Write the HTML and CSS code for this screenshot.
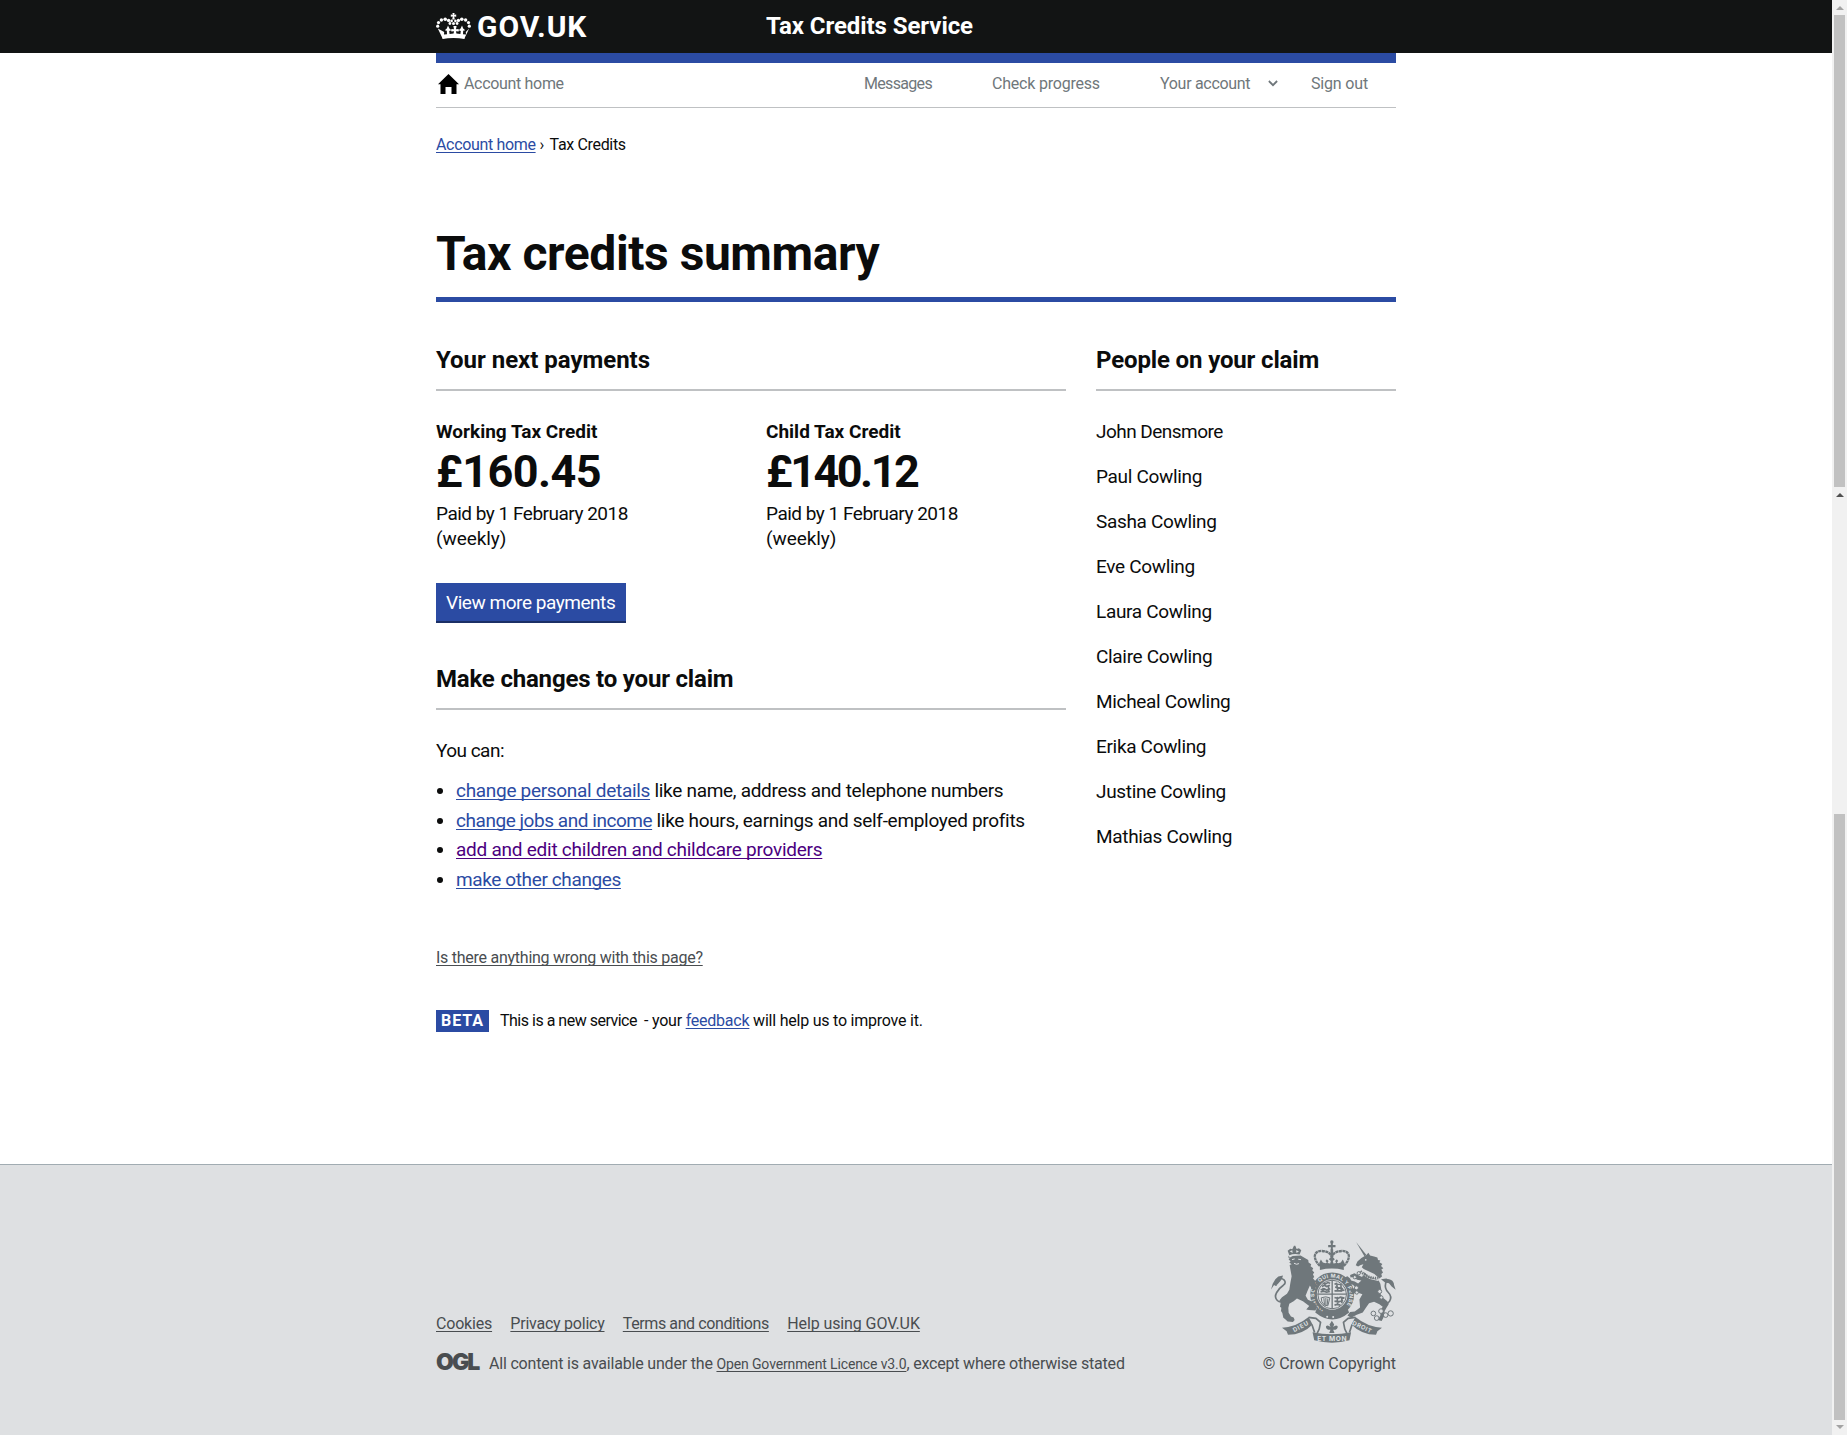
FILE: index.html
```
<!DOCTYPE html>
<html lang="en">
<head>
<meta charset="utf-8">
<title>Tax credits summary</title>
<link rel="stylesheet" href="styles.css">
</head>
<body>
<div class="page">
  <header class="header">
    <div class="container header-inner">
      <a class="logo" href="#">
        <svg class="crown" width="35" height="27" viewBox="0 0 35 27" fill="#fff" aria-hidden="true">
          <path d="M16.400 0h2.200l-.4 1.800 2-.4v2.400l-2-.4.6 3h-2.600l.6-3-2 .4V1.400l2 .4z"/>
          <g id="pearls">
            <circle cx="1.700" cy="13.200" r="1.600"/><circle cx="2.500" cy="9.600" r="1.600"/><circle cx="5.400" cy="7" r="1.700"/>
            <circle cx="9.200" cy="6.200" r="1.800"/><circle cx="12.600" cy="7.400" r="1.700"/><circle cx="13.900" cy="10.500" r="1.400"/>
            <circle cx="15.600" cy="7.900" r="1.300"/>
          </g>
          <use href="#pearls" transform="matrix(-1 0 0 1 35 0)"/>
          <circle cx="17.500" cy="10.500" r="1.500"/>
          <path d="M1.800 15.600l4.800 9.800c7-1.600 14.800-1.600 21.800 0l4.800-9.800-3.400 3.400 .2 2.600-3-.4 .2-3.400 2-.6-2-1.600-1.200-3-1.400 3-2 1.600 2.200 .8-.4 3-4-.5-.4-2.300 2.700 .3v-2.600l-2.700 .3 .6-3.200h-3.200l.6 3.200-2.700-.3v2.600l2.700-.3-.4 2.300-4 .5-.4-3 2.200-.8-2-1.600-1.400-3-1.200 3-2 1.600 2 .6 .2 3.400-3 .4 .2-2.600z"/>
          <path d="M6.500 23.800c7-1.700 15-1.700 22 0v2.200c-7-1.300-15-1.300-22 0z"/>
        </svg>
        <span class="logo-text">GOV.UK</span>
      </a>
      <a class="service-name" href="#">Tax Credits Service</a>
    </div>
  </header>

  <div class="container">
    <nav class="nav">
      <a class="nav-home" href="#">
        <svg width="21" height="20" viewBox="0 0 21 20" aria-hidden="true"><path d="M10.500 0 21 10.200h-2.500V20h-5v-7h-6v7h-5v-9.800H0z"/></svg>
        <span class="nav-home-text">Account home</span>
      </a>
      <a class="nav-messages" href="#">Messages</a>
      <a class="nav-progress" href="#">Check progress</a>
      <a class="nav-account" href="#">Your account</a>
      <svg class="chevron" width="10" height="7" viewBox="0 0 10 7" aria-hidden="true"><path d="M.9 1 5 5.200 9.100 1" fill="none" stroke="#6f777b" stroke-width="1.800"/></svg>
      <a class="nav-signout" href="#">Sign out</a>
    </nav>

    <div class="breadcrumb"><a href="#">Account home</a><span class="sep">›</span><span>Tax Credits</span></div>

    <h1 class="title">Tax credits summary</h1>

    <div class="columns">
      <main class="main">
        <h2 class="section-title next-title">Your next payments</h2>
        <div class="payments">
          <div class="payment">
            <h3 class="payment-name">Working Tax Credit</h3>
            <p class="amount">£160.45</p>
            <p class="paid">Paid by 1 February 2018</p>
            <p class="freq">(weekly)</p>
          </div>
          <div class="payment">
            <h3 class="payment-name">Child Tax Credit</h3>
            <p class="amount amount-narrow">£140.12</p>
            <p class="paid">Paid by 1 February 2018</p>
            <p class="freq">(weekly)</p>
          </div>
        </div>
        <a class="button" href="#">View more payments</a>

        <h2 class="section-title changes-title">Make changes to your claim</h2>
        <p class="lead">You can:</p>
        <ul class="changes">
          <li><a href="#">change personal details</a> like name, address and telephone numbers</li>
          <li><a class="tight" href="#">change jobs and income</a> like hours, earnings and self-employed profits</li>
          <li><a class="visited" href="#">add and edit children and childcare providers</a></li>
          <li><a class="other" href="#">make other changes</a></li>
        </ul>
      </main>

      <aside class="people">
        <h2 class="section-title">People on your claim</h2>
        <ul class="names">
          <li class="john">John Densmore</li>
          <li>Paul Cowling</li>
          <li>Sasha Cowling</li>
          <li>Eve Cowling</li>
          <li>Laura Cowling</li>
          <li>Claire Cowling</li>
          <li>Micheal Cowling</li>
          <li>Erika Cowling</li>
          <li>Justine Cowling</li>
          <li>Mathias Cowling</li>
        </ul>
      </aside>
    </div>

    <a class="report" href="#">Is there anything wrong with this page?</a>

    <div class="phase">
      <strong class="phase-tag">BETA</strong>
      <span class="phase-new">This is a new service</span>
      <span class="phase-rest">- your <a href="#">feedback</a> will help us to improve it.</span>
    </div>
  </div>

  <footer class="footer">
    <div class="container footer-inner">
      <div class="footer-meta">
        <div class="footer-links">
          <a href="#">Cookies</a><a class="privacy" href="#">Privacy policy</a><a class="terms" href="#">Terms and conditions</a><a class="help" href="#">Help using GOV.UK</a>
        </div>
        <div class="licence">
          <span class="ogl">OGL</span>
          <span>All content is available under the <a href="#">Open Government Licence v3.0</a>, except where otherwise stated</span>
        </div>
      </div>
      <div class="copyright">
        <svg class="crest" width="125" height="103" viewBox="93 58 376 310" fill="#6f777b" aria-hidden="true">
          <!-- centre crown -->
          <circle cx="276" cy="64" r="5"/><path d="M273 66h6v7h8v7h-8v8h-6v-8h-8v-7h8z"/>
          <g fill="none" stroke="#6f777b" stroke-width="7">
            <path d="M240 136C216 112 222 90 246 91c18 1 27 8 30 18M312 136c24-24 18-46-6-45-18 1-27 8-30 18" stroke-dasharray="9 1.500"/>
            <path d="M276 86v24" stroke-width="8"/>
          </g>
          <path d="M240 137l-2-10 5-10 6 9 8 2 4-2-4-5 4-5 5 5-3 6 8 2 2-8-6-5 9-10 9 10-6 5 2 8 8-2-3-6 5-5 4 5-4 5 4 2 8-2 6-9 5 10-2 10z"/>
          <path d="M240 136q36-10 72 0v12q-36-9-72 0z"/>
          <!-- garter -->
          <circle cx="277" cy="222" r="56" fill="none" stroke="#6f777b" stroke-width="20"/>
          <path id="garter" d="M251 271A53 53 0 1 1 303 270" fill="none"/>
          <text class="motto" font-size="16"><textPath href="#garter" textLength="252" startOffset="2">HONI SOIT QUI MAL Y PENSE</textPath></text>
          <path d="M232 262q45 40 90 0l6 14q-50 42-102 0z"/>
          <circle cx="262" cy="289" r="3" fill="#dee0e2"/><circle cx="280" cy="290" r="3" fill="#dee0e2"/>
          <!-- quartered shield -->
          <circle cx="277" cy="222" r="43" fill="none" stroke="#6f777b" stroke-width="3"/>
          <path d="M277 178v88M233 221h88" stroke="#6f777b" stroke-width="4"/>
          <g fill="none" stroke="#6f777b" stroke-width="5">
            <path d="M246 198l8-4 6 4 10-4M242 207l12-2 6 4 11-4M249 188l8 2 7-4 7 2M250 202l-2 9M266 198v14M242 214l10-2 8 3 10-2"/>
            <path d="M284 190l22 2M286 200l24 4M284 211l30-2M290 186l4 26M303 190l2 24"/>
            <path d="M284 231l10 3 8-4 12 3M284 242l12 2 14-4M284 254l8-2 10 2M292 229l2 26M306 230v18"/>
            <path d="M244 232q14-6 26 0l-6 24q-12 2-18-12zM252 233l2 20M258 232v22M264 234l-2 20" stroke-width="3"/>
          </g>
          <!-- lion -->
          <path d="M148 104l-5-14 8-6 6 2 5-11h4l4 10 7-2 7 6-5 13q-16-4-31 2z"/>
          <path d="M149 92l8-3 1 8zM168 89l9 3-7 5z" fill="#dee0e2"/>
          <path d="M146 113l12-7 24-1 14 8 9 5 1 8 8 5-2 6 8 6-3 6 6 7-4 5 4 8-4 4 6 7 2 10 7 4-1 6-8 2 4 5-8 3-6-6-5-9-8 18-5 13 7 12 14 6 8 5 5 9-4 12-20-1-8-2 5-6 4-4-19-15-18-8-10 8-13 8-3 13 1 14 7 11 8 3 3 8-5 6-16-2-8-7-5-4-3-14-4-6 1-10-4-3 2-13-4-6 8-10 15-10 7-12 3-20 4-21-4-22-2-12 6-2-7-5 4-4-6-5 4-6-5-6z"/>
          <path d="M156 117l8-2M175 116l8 1M162 128l8 3 7-2" stroke="#dee0e2" stroke-width="3" fill="none"/>
          <path d="M138 238q-16 12-26 2t-2-24 20-22q10-8 2-16-10-8-16 0-10 8-8 18" fill="none" stroke="#6f777b" stroke-width="5"/>
          <path d="M93 207l5-17 8-14 9-8 14-3-3 10-6 8-8 9-11 3z"/>
          <!-- unicorn -->
          <path d="M349 64l31 39-6 4z"/><path d="M380 103l6-7 5 9 12 3 10 3 2 7 7 2-3 5 9 5-4 6 7 7-6 4 5 9-5 4 2 8-8 6-3-3q-10-12-28-18l-16-8-6-5 5-9-8 2-8 5-7-4 5-11 12-11z"/>
          <circle cx="378" cy="118" r="2.500" fill="#dee0e2"/>
          <path d="M374 155l12 12 20 8 11 5 5 10 3 18-3 12 8 12 13 10 4 9-6 10-6 11-1 14-8 16-12-3 8-14 1-16 6-10-10-8-16-7-15 4-10 15-9 13-18 7-17 9-11-7 8-10 14-2 16-12-2-24 9-16-15-5-12 4-8-7-3-10 10 1 9-2-10-9-10-3-8-12-7-7 9-4 8 7 3 6 11 3 10 6 10-9-13-2-11-9-9 2-1-8 13-5 12 6 11 5z"/>
          <path d="M366 160q24 18 50 20" fill="none" stroke="#dee0e2" stroke-width="3"/>
          <path d="M362 152q26 24 54 20" fill="none" stroke="#6f777b" stroke-width="8" stroke-dasharray="4 3"/>
          <path d="M422 244q20 12 28-2t-4-26-8-28q4-12 14-8 10 4 8 18" fill="none" stroke="#6f777b" stroke-width="5"/>
          <path d="M424 176l16-2 14 6 8 10 6 18-12-10-8-10-12-2z"/>
          <g fill="#dee0e2" stroke="#6f777b" stroke-width="3"><circle cx="357" cy="158" r="5"/><circle cx="345" cy="170" r="5"/><circle cx="350" cy="202" r="6"/><circle cx="351" cy="216" r="5"/><circle cx="420" cy="213" r="6"/><circle cx="425" cy="231" r="5"/><circle cx="401" cy="279" r="7"/><circle cx="411" cy="293" r="7"/><circle cx="424" cy="272" r="7"/><circle cx="438" cy="284" r="7"/><circle cx="453" cy="279" r="8"/></g>
          <!-- ribbon -->
          <path d="M126 322q44-2 80-32l12 22q-30 31-74 31l-4-10zM427 322q-44-2-80-32l-12 22q30 31 74 31l4-10z"/>
          <path d="M206 291l22 3 14 12-4 20-6 12M347 291l-22 3-14 12 4 20 6 12M216 312l8 24M337 312l-8 24" fill="none" stroke="#6f777b" stroke-width="5"/>
          <path d="M218 336q58 12 116 0l-5 24q-52 14-106 0z"/>
          <path d="M276 301l7 11-3 8q8-8 13-3 3 7-6 11h-7l4 10h-16l4-10h-7q-9-4-6-11 5-5 13 3l-3-8z"/>
          <g class="motto" font-size="20"><text x="232" y="361" textLength="88">ET MON</text><text font-size="18" transform="translate(163 336) rotate(-28)" textLength="50">DIEU</text><text font-size="18" transform="translate(336 312) rotate(25)" textLength="62">DROIT</text></g>
        </svg>
        <a href="#">© Crown Copyright</a>
      </div>
    </div>
  </footer>
</div>
<div class="scrollbars" aria-hidden="true">
  <div class="track track-top"><span class="arrow up muted"></span><span class="thumb thumb-top"></span></div>
  <div class="track track-bottom"><span class="arrow up"></span><span class="thumb thumb-bottom"></span><span class="arrow down muted"></span></div>
</div>
</body>
</html>
```
FILE: styles.css
```
* { box-sizing: border-box; }
body {
  margin: 0;
  display: flex;
  height: 1435px;
  overflow: hidden;
  background: #fff;
  color: #0b0c0c;
  font: 19px/25px Roboto, "Liberation Sans", sans-serif;
  letter-spacing: -0.017em;
}
h1, h2, h3, p, ul { margin: 0; padding: 0; }
h1, h2, h3 { letter-spacing: -0.005em; }
ul { list-style: none; }
a { color: #2b4ba3; text-underline-offset: 2px; text-decoration-thickness: 1px; text-decoration-skip-ink: none; }
.page { flex: 1; display: flex; flex-direction: column; }
.container { width: 960px; margin: 0 auto; }

/* header */
.header { height: 53px; background: #121414; }
.header-inner { display: flex; height: 53px; }
.header a { color: #fff; text-decoration: none; font-weight: 700; }
.logo { width: 330px; display: flex; }
.crown { margin: 13px 6px 0 0; }
.logo-text { font-size: 30px; line-height: 54px; letter-spacing: 0.031em; }
.service-name { font-size: 24px; line-height: 53px; letter-spacing: -0.003em; }

/* account nav */
.nav {
  height: 55px;
  padding: 0 28px 2px 2px;
  border-top: 10px solid #2b4ba3;
  border-bottom: 1px solid #bfc1c3;
  display: flex;
  align-items: center;
  font-size: 16px;
  line-height: 20px;
}
.nav a { color: #6f777b; text-decoration: none; white-space: nowrap; }
.nav-home { display: flex; width: 426px; }
.nav-home svg { margin: 0 5px 0 0; }
.nav-messages { width: 128px; letter-spacing: -0.042em; }
.nav-progress { width: 168px; letter-spacing: -0.013em; }
.nav-account { width: 108px; letter-spacing: -0.019em; }
.chevron { margin: 0 33px 2px 0; }
.nav-signout { letter-spacing: -0.011em; }

.breadcrumb { display: flex; margin-top: 27px; font-size: 16px; line-height: 20px; letter-spacing: -0.021em; }
.sep { width: 14px; padding-left: 4px; }

.title {
  margin-top: 74px;
  height: 73px;
  border-bottom: 5px solid #2b4ba3;
  font-size: 48px;
  line-height: 50px;
  letter-spacing: -0.009em;
}

.columns { display: grid; grid-template-columns: 630px 300px; gap: 30px; margin-top: 43px; }
.section-title { padding-bottom: 14px; border-bottom: 2px solid #bfc1c3; font-size: 24px; line-height: 30px; letter-spacing: -0.006em; }
.next-title { letter-spacing: -0.001em; }
.payments { display: flex; margin-top: 28px; }
.payment { flex: none; width: 330px; }
.payment + .payment { width: 300px; }
.payment-name { font-size: 19px; letter-spacing: 0; }
.amount { margin: 3px 0 4px; font-size: 45px; line-height: 50px; font-weight: 700; letter-spacing: -0.012em; }
.amount-narrow { letter-spacing: -0.056em; }
.paid { letter-spacing: -0.026em; }
.freq { letter-spacing: -0.003em; }
.button {
  display: block;
  width: 190px;
  height: 40px;
  margin-top: 32px;
  padding-left: 10px;
  border-bottom: 2px solid #1b2f66;
  background: #2b4ba3;
  color: #fff;
  line-height: 39px;
  letter-spacing: -0.024em;
  text-decoration: none;
}
.changes-title { margin-top: 41px; letter-spacing: -0.008em; }
.lead { margin-top: 28px; letter-spacing: -0.028em; }
.changes { margin: 13px 0 0 20px; line-height: 29.7px; letter-spacing: -0.016em; list-style: disc; }
.changes .tight { letter-spacing: -0.024em; }
.changes .other { letter-spacing: -0.02em; }
.changes .visited { color: #4c007f; letter-spacing: -0.013em; }

.names { margin-top: 28px; letter-spacing: -0.017em; }
.names li { margin-bottom: 20px; }
.john { letter-spacing: -0.028em; }

.report { display: block; margin-top: 53px; font-size: 16px; line-height: 20px; color: #494d50; letter-spacing: -0.016em; }
.phase { display: flex; height: 22px; margin-top: 42px; font-size: 16px; line-height: 22px; }
.phase-tag { width: 53px; margin-right: 11px; padding-left: 5px; background: #2b4ba3; color: #fff; line-height: 21px; letter-spacing: 0.06em; }
.phase-new { width: 144px; letter-spacing: -0.031em; }
.phase-rest { letter-spacing: -0.014em; }

/* footer */
.footer { flex: 1; margin-top: 132px; border-top: 1px solid #a1acb2; background: #dee0e2; color: #494d50; font-size: 16px; line-height: 20px; letter-spacing: -0.012em; }
.footer a { color: inherit; }
.footer-inner { display: flex; justify-content: space-between; padding-top: 75px; }
.footer-meta { padding-top: 74px; }
.footer-links { display: flex; gap: 18.300px; }
.footer .privacy { letter-spacing: -0.015em; }
.footer .terms { letter-spacing: -0.025em; }
.footer .help { letter-spacing: -0.006em; }
.licence { display: flex; margin-top: 20px; }
.licence a { font-size: 14px; letter-spacing: -0.009em; }
.ogl { width: 53px; margin-top: -2px; font: 900 23px/20px Inter, sans-serif; letter-spacing: -0.085em; }
.copyright { display: flex; flex-direction: column; align-items: flex-end; }
.copyright a { margin-top: 11px; text-decoration: none; letter-spacing: -0.005em; }
.motto { fill: #dee0e2; font-family: Inter, sans-serif; font-weight: 700; letter-spacing: 0; }

/* scrollbars */
.scrollbars { width: 15px; background: #f1f1f1; display: flex; flex-direction: column; }
.track { display: flex; flex-direction: column; align-items: center; }
.track-top { height: 487px; }
.track-bottom { height: 948px; }
.thumb { width: 11px; background: #c1c1c1; }
.thumb-top { flex: 1; }
.thumb-bottom { height: 606px; margin-top: 312px; }
.arrow { width: 0; height: 0; border: solid transparent; border-width: 0 4px; }
.up { border-bottom: 4px solid #505050; margin: 6px 0 5px; }
.down { border-top: 4px solid #a3a3a3; margin-top: 5px; }
.up.muted { border-bottom-color: #a3a3a3; }
```
